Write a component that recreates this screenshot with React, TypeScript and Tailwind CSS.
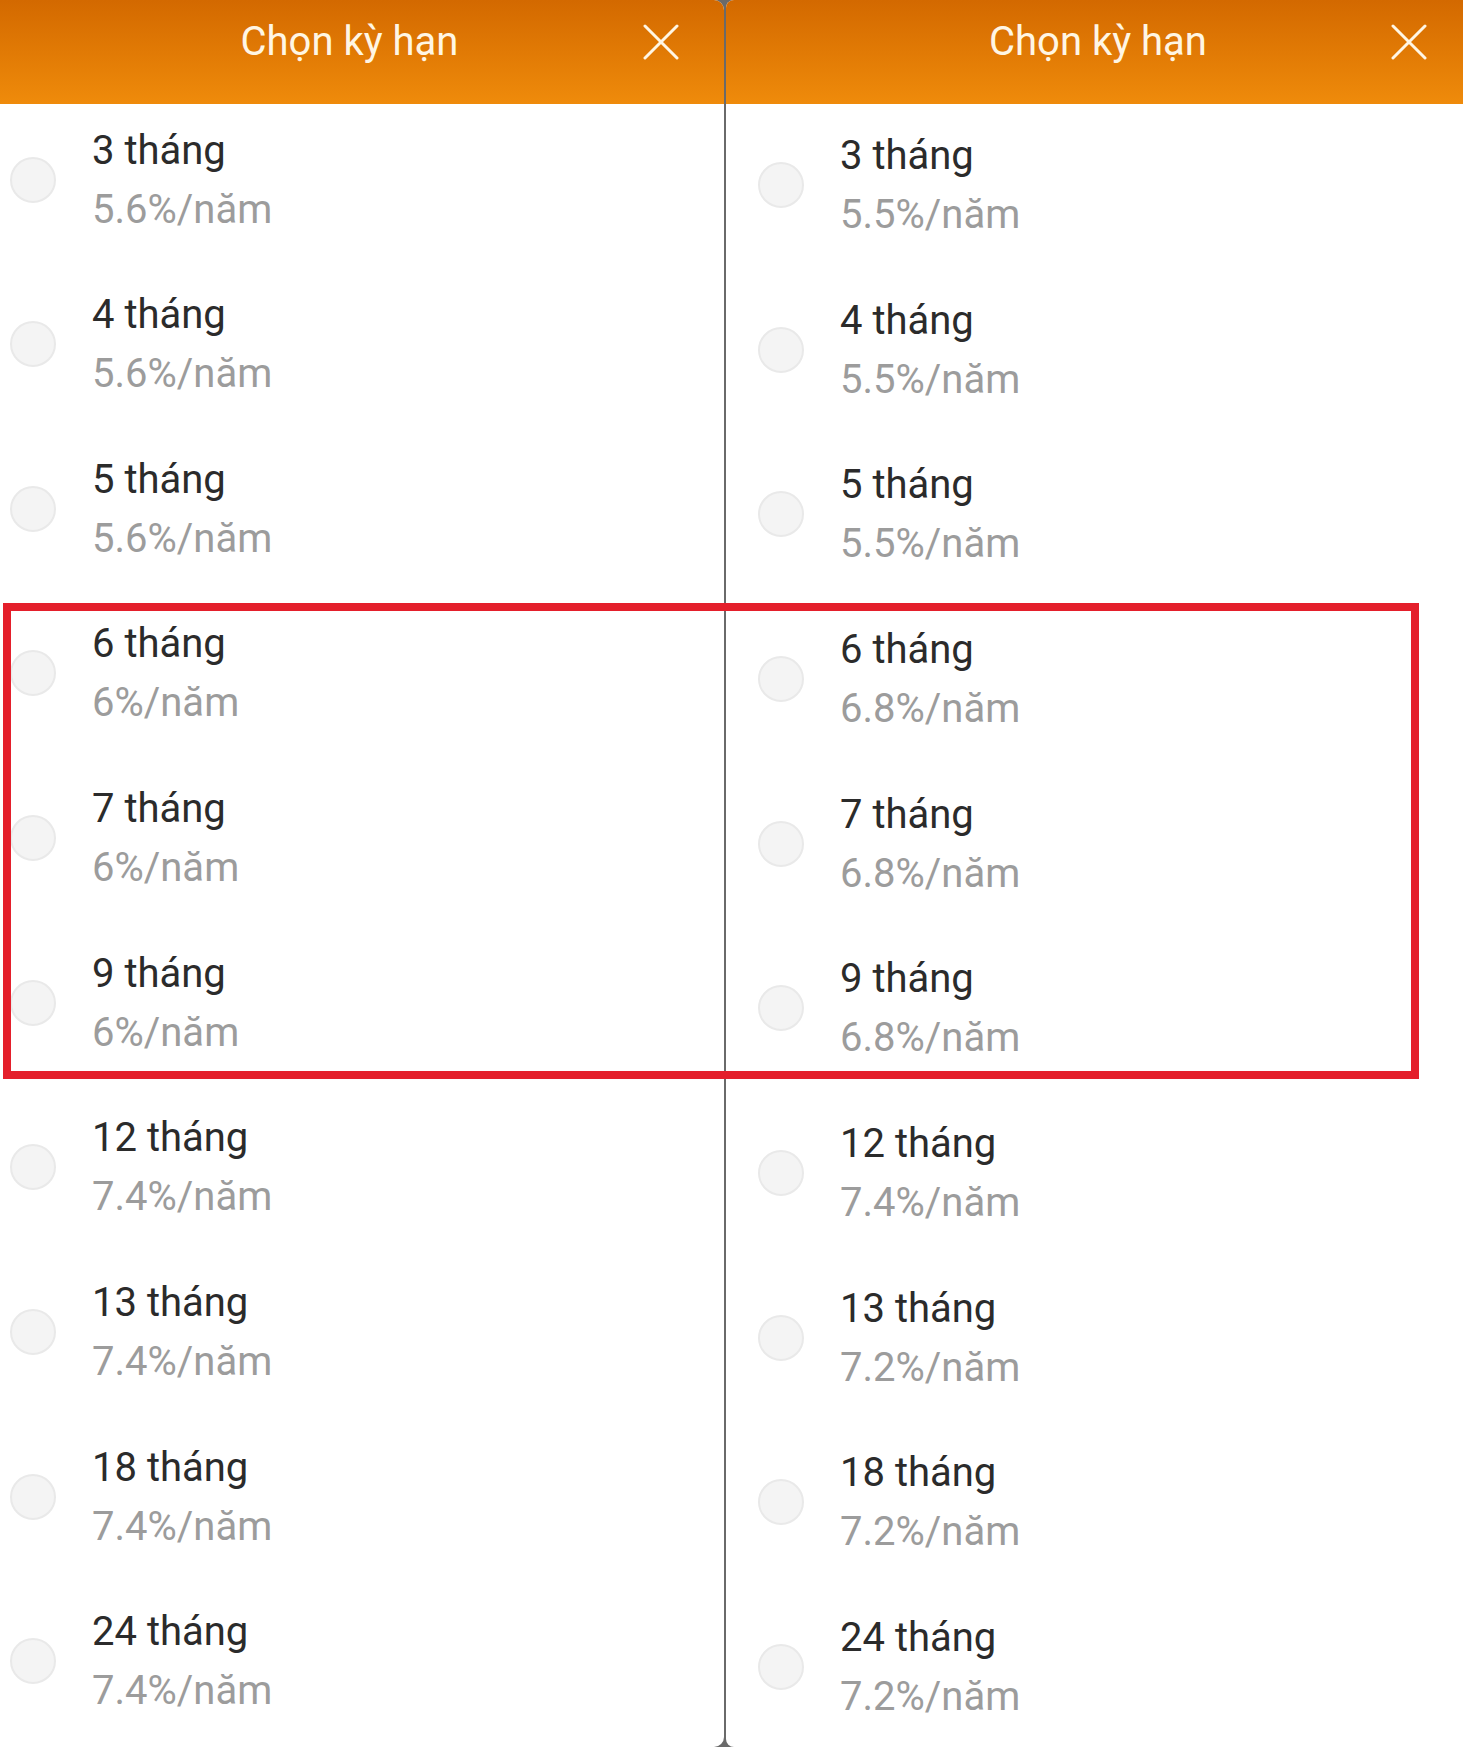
import React from "react";

type Term = { label: string; rate: string };

const leftTerms: Term[] = [
  { label: "3 tháng", rate: "5.6%/năm" },
  { label: "4 tháng", rate: "5.6%/năm" },
  { label: "5 tháng", rate: "5.6%/năm" },
  { label: "6 tháng", rate: "6%/năm" },
  { label: "7 tháng", rate: "6%/năm" },
  { label: "9 tháng", rate: "6%/năm" },
  { label: "12 tháng", rate: "7.4%/năm" },
  { label: "13 tháng", rate: "7.4%/năm" },
  { label: "18 tháng", rate: "7.4%/năm" },
  { label: "24 tháng", rate: "7.4%/năm" },
];

const rightTerms: Term[] = [
  { label: "3 tháng", rate: "5.5%/năm" },
  { label: "4 tháng", rate: "5.5%/năm" },
  { label: "5 tháng", rate: "5.5%/năm" },
  { label: "6 tháng", rate: "6.8%/năm" },
  { label: "7 tháng", rate: "6.8%/năm" },
  { label: "9 tháng", rate: "6.8%/năm" },
  { label: "12 tháng", rate: "7.4%/năm" },
  { label: "13 tháng", rate: "7.2%/năm" },
  { label: "18 tháng", rate: "7.2%/năm" },
  { label: "24 tháng", rate: "7.2%/năm" },
];

function CloseIcon() {
  return (
    <svg width="36" height="36" viewBox="0 0 36 36" fill="none">
      <path d="M2 2L34 34M34 2L2 34" stroke="#fff6e4" strokeWidth="3" strokeLinecap="round" />
    </svg>
  );
}

function TermRow({ term, pad }: { term: Term; pad: string }) {
  return (
    <div className={`flex h-[164.66px] shrink-0 items-start ${pad}`}>
      <div className="flex h-[118px] items-center gap-[36px]">
        <div className="h-[46px] w-[46px] shrink-0 rounded-full border-2 border-[#e9e9e9] bg-[#f4f4f4]" />
        <div>
          <div className="text-[40px] leading-[59px] text-[#2b2b2b]">{term.label}</div>
          <div className="text-[40px] leading-[59px] text-[#9c9c9c]">{term.rate}</div>
        </div>
      </div>
    </div>
  );
}

function Panel({ terms, side }: { terms: Term[]; side: "left" | "right" }) {
  const isLeft = side === "left";
  return (
    <div
      className={
        isLeft
          ? "flex h-full w-[724px] shrink-0 flex-col overflow-hidden rounded-r-[10px] bg-white"
          : "flex h-full flex-1 flex-col overflow-hidden rounded-l-[8px] bg-white"
      }
    >
      {/* Header */}
      <div
        className={`relative flex h-[104px] shrink-0 items-center justify-center bg-linear-to-b from-[#d36900] to-[#ef8b0b] ${
          isLeft ? "pr-[25px]" : "pl-[7px]"
        }`}
      >
        <span className="pb-[20px] text-[40px] text-[#fff6e4]">Chọn kỳ hạn</span>
        <button className={`absolute top-[24px] ${isLeft ? "right-[45px]" : "right-[36px]"}`}>
          <CloseIcon />
        </button>
      </div>

      {/* Terms */}
      <div className={`flex flex-col ${isLeft ? "pt-[16.5px]" : "pt-[22px]"}`}>
        {terms.map((t) => (
          <TermRow key={t.label} term={t} pad={isLeft ? "pl-[10px]" : "pl-[32px]"} />
        ))}
      </div>
    </div>
  );
}

export default function App() {
  return (
    <div
      className="relative flex h-[1747px] w-[1463px] gap-[2px] overflow-hidden bg-[#6a6a6a]"
      style={{ fontFamily: "Roboto, 'Noto Sans', sans-serif" }}
    >
      <Panel terms={leftTerms} side="left" />
      <Panel terms={rightTerms} side="right" />

      {/* Highlight box */}
      <div className="pointer-events-none absolute left-[3px] top-[603px] h-[476px] w-[1416px] border-[8px] border-[#e41f2b]" />
    </div>
  );
}
